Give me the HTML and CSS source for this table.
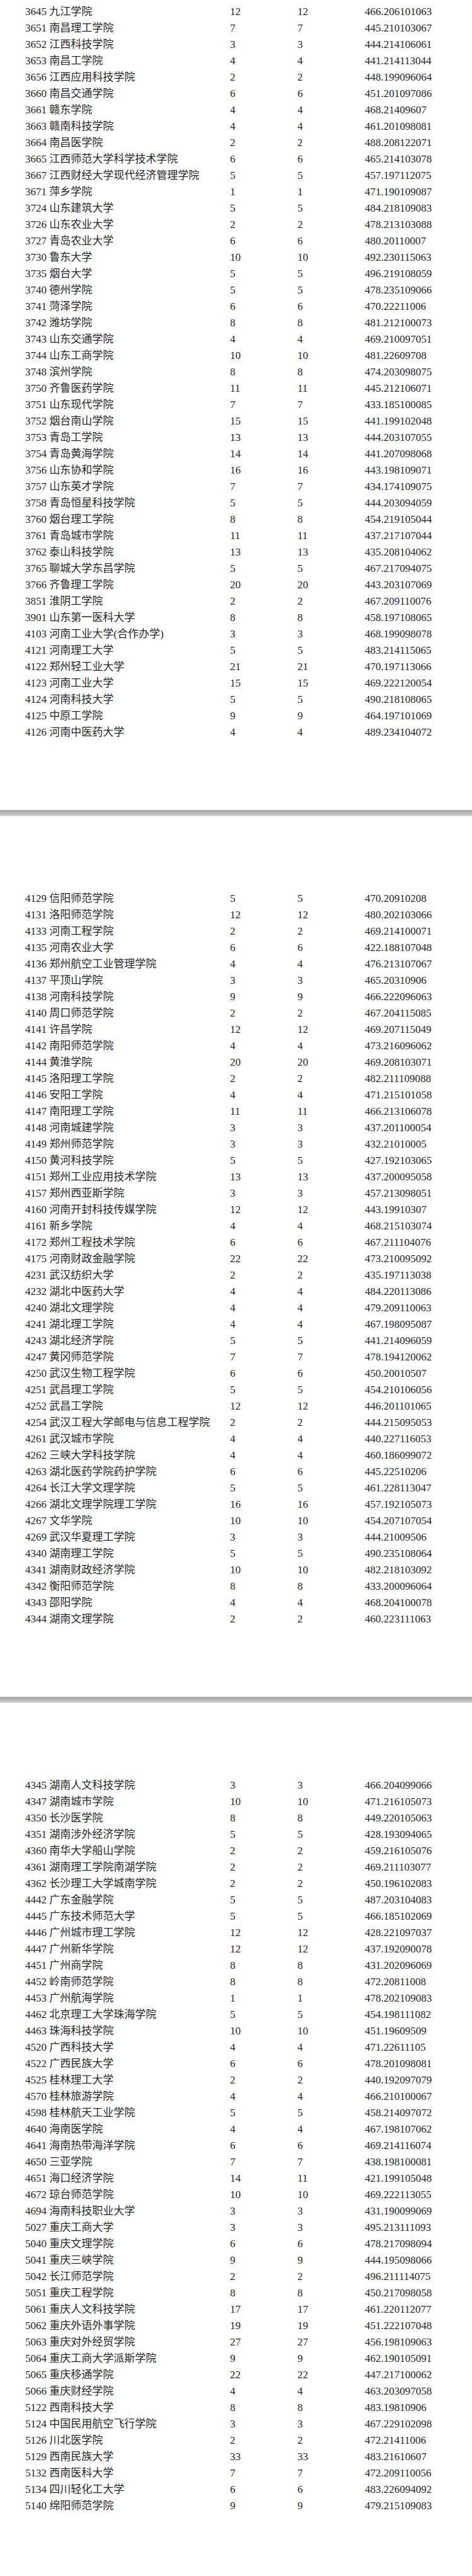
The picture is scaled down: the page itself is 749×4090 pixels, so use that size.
FILE: index.html
```html
<!DOCTYPE html>
<html lang="zh-CN">
<head>
<meta charset="utf-8">
<title>院校录取数据</title>
<link rel="stylesheet" href="styles.css">
</head>
<body>
<div class="page page-first">
<div class="row"><span>3645 九江学院</span><span>12</span><span>12</span><span>466.206101063</span></div>
<div class="row"><span>3651 南昌理工学院</span><span>7</span><span>7</span><span>445.210103067</span></div>
<div class="row"><span>3652 江西科技学院</span><span>3</span><span>3</span><span>444.214106061</span></div>
<div class="row"><span>3653 南昌工学院</span><span>4</span><span>4</span><span>441.214113044</span></div>
<div class="row"><span>3656 江西应用科技学院</span><span>2</span><span>2</span><span>448.199096064</span></div>
<div class="row"><span>3660 南昌交通学院</span><span>6</span><span>6</span><span>451.201097086</span></div>
<div class="row"><span>3661 赣东学院</span><span>4</span><span>4</span><span>468.21409607</span></div>
<div class="row"><span>3663 赣南科技学院</span><span>4</span><span>4</span><span>461.201098081</span></div>
<div class="row"><span>3664 南昌医学院</span><span>2</span><span>2</span><span>488.208122071</span></div>
<div class="row"><span>3665 江西师范大学科学技术学院</span><span>6</span><span>6</span><span>465.214103078</span></div>
<div class="row"><span>3667 江西财经大学现代经济管理学院</span><span>5</span><span>5</span><span>457.197112075</span></div>
<div class="row"><span>3671 萍乡学院</span><span>1</span><span>1</span><span>471.190109087</span></div>
<div class="row"><span>3724 山东建筑大学</span><span>5</span><span>5</span><span>484.218109083</span></div>
<div class="row"><span>3726 山东农业大学</span><span>2</span><span>2</span><span>478.213103088</span></div>
<div class="row"><span>3727 青岛农业大学</span><span>6</span><span>6</span><span>480.20110007</span></div>
<div class="row"><span>3730 鲁东大学</span><span>10</span><span>10</span><span>492.230115063</span></div>
<div class="row"><span>3735 烟台大学</span><span>5</span><span>5</span><span>496.219108059</span></div>
<div class="row"><span>3740 德州学院</span><span>5</span><span>5</span><span>478.235109066</span></div>
<div class="row"><span>3741 菏泽学院</span><span>6</span><span>6</span><span>470.22211006</span></div>
<div class="row"><span>3742 潍坊学院</span><span>8</span><span>8</span><span>481.212100073</span></div>
<div class="row"><span>3743 山东交通学院</span><span>4</span><span>4</span><span>469.210097051</span></div>
<div class="row"><span>3744 山东工商学院</span><span>10</span><span>10</span><span>481.22609708</span></div>
<div class="row"><span>3748 滨州学院</span><span>8</span><span>8</span><span>474.203098075</span></div>
<div class="row"><span>3750 齐鲁医药学院</span><span>11</span><span>11</span><span>445.212106071</span></div>
<div class="row"><span>3751 山东现代学院</span><span>7</span><span>7</span><span>433.185100085</span></div>
<div class="row"><span>3752 烟台南山学院</span><span>15</span><span>15</span><span>441.199102048</span></div>
<div class="row"><span>3753 青岛工学院</span><span>13</span><span>13</span><span>444.203107055</span></div>
<div class="row"><span>3754 青岛黄海学院</span><span>14</span><span>14</span><span>441.207098068</span></div>
<div class="row"><span>3756 山东协和学院</span><span>16</span><span>16</span><span>443.198109071</span></div>
<div class="row"><span>3757 山东英才学院</span><span>7</span><span>7</span><span>434.174109075</span></div>
<div class="row"><span>3758 青岛恒星科技学院</span><span>5</span><span>5</span><span>444.203094059</span></div>
<div class="row"><span>3760 烟台理工学院</span><span>8</span><span>8</span><span>454.219105044</span></div>
<div class="row"><span>3761 青岛城市学院</span><span>11</span><span>11</span><span>437.217107044</span></div>
<div class="row"><span>3762 泰山科技学院</span><span>13</span><span>13</span><span>435.208104062</span></div>
<div class="row"><span>3765 聊城大学东昌学院</span><span>5</span><span>5</span><span>467.217094075</span></div>
<div class="row"><span>3766 齐鲁理工学院</span><span>20</span><span>20</span><span>443.203107069</span></div>
<div class="row"><span>3851 淮阴工学院</span><span>2</span><span>2</span><span>467.209110076</span></div>
<div class="row"><span>3901 山东第一医科大学</span><span>8</span><span>8</span><span>458.197108065</span></div>
<div class="row"><span>4103 河南工业大学(合作办学)</span><span>3</span><span>3</span><span>468.199098078</span></div>
<div class="row"><span>4121 河南理工大学</span><span>5</span><span>5</span><span>483.214115065</span></div>
<div class="row"><span>4122 郑州轻工业大学</span><span>21</span><span>21</span><span>470.197113066</span></div>
<div class="row"><span>4123 河南工业大学</span><span>15</span><span>15</span><span>469.222120054</span></div>
<div class="row"><span>4124 河南科技大学</span><span>5</span><span>5</span><span>490.218108065</span></div>
<div class="row"><span>4125 中原工学院</span><span>9</span><span>9</span><span>464.197101069</span></div>
<div class="row"><span>4126 河南中医药大学</span><span>4</span><span>4</span><span>489.234104072</span></div>
</div>
<div class="sep"></div>
<div class="page">
<div class="row"><span>4129 信阳师范学院</span><span>5</span><span>5</span><span>470.20910208</span></div>
<div class="row"><span>4131 洛阳师范学院</span><span>12</span><span>12</span><span>480.202103066</span></div>
<div class="row"><span>4133 河南工程学院</span><span>2</span><span>2</span><span>469.214100071</span></div>
<div class="row"><span>4135 河南农业大学</span><span>6</span><span>6</span><span>422.188107048</span></div>
<div class="row"><span>4136 郑州航空工业管理学院</span><span>4</span><span>4</span><span>476.213107067</span></div>
<div class="row"><span>4137 平顶山学院</span><span>3</span><span>3</span><span>465.20310906</span></div>
<div class="row"><span>4138 河南科技学院</span><span>9</span><span>9</span><span>466.222096063</span></div>
<div class="row"><span>4140 周口师范学院</span><span>2</span><span>2</span><span>467.204115085</span></div>
<div class="row"><span>4141 许昌学院</span><span>12</span><span>12</span><span>469.207115049</span></div>
<div class="row"><span>4142 南阳师范学院</span><span>4</span><span>4</span><span>473.216096062</span></div>
<div class="row"><span>4144 黄淮学院</span><span>20</span><span>20</span><span>469.208103071</span></div>
<div class="row"><span>4145 洛阳理工学院</span><span>2</span><span>2</span><span>482.211109088</span></div>
<div class="row"><span>4146 安阳工学院</span><span>4</span><span>4</span><span>471.215101058</span></div>
<div class="row"><span>4147 南阳理工学院</span><span>11</span><span>11</span><span>466.213106078</span></div>
<div class="row"><span>4148 河南城建学院</span><span>3</span><span>3</span><span>437.201100054</span></div>
<div class="row"><span>4149 郑州师范学院</span><span>3</span><span>3</span><span>432.21010005</span></div>
<div class="row"><span>4150 黄河科技学院</span><span>5</span><span>5</span><span>427.192103065</span></div>
<div class="row"><span>4151 郑州工业应用技术学院</span><span>13</span><span>13</span><span>437.200095058</span></div>
<div class="row"><span>4157 郑州西亚斯学院</span><span>3</span><span>3</span><span>457.213098051</span></div>
<div class="row"><span>4160 河南开封科技传媒学院</span><span>12</span><span>12</span><span>443.19910307</span></div>
<div class="row"><span>4161 新乡学院</span><span>4</span><span>4</span><span>468.215103074</span></div>
<div class="row"><span>4172 郑州工程技术学院</span><span>6</span><span>6</span><span>467.211104076</span></div>
<div class="row"><span>4175 河南财政金融学院</span><span>22</span><span>22</span><span>473.210095092</span></div>
<div class="row"><span>4231 武汉纺织大学</span><span>2</span><span>2</span><span>435.197113038</span></div>
<div class="row"><span>4232 湖北中医药大学</span><span>4</span><span>4</span><span>484.220113086</span></div>
<div class="row"><span>4240 湖北文理学院</span><span>4</span><span>4</span><span>479.209110063</span></div>
<div class="row"><span>4241 湖北理工学院</span><span>4</span><span>4</span><span>467.198095087</span></div>
<div class="row"><span>4243 湖北经济学院</span><span>5</span><span>5</span><span>441.214096059</span></div>
<div class="row"><span>4247 黄冈师范学院</span><span>7</span><span>7</span><span>478.194120062</span></div>
<div class="row"><span>4250 武汉生物工程学院</span><span>6</span><span>6</span><span>450.20010507</span></div>
<div class="row"><span>4251 武昌理工学院</span><span>5</span><span>5</span><span>454.210106056</span></div>
<div class="row"><span>4252 武昌工学院</span><span>12</span><span>12</span><span>446.201101065</span></div>
<div class="row"><span>4254 武汉工程大学邮电与信息工程学院</span><span>2</span><span>2</span><span>444.215095053</span></div>
<div class="row"><span>4261 武汉城市学院</span><span>4</span><span>4</span><span>440.227116053</span></div>
<div class="row"><span>4262 三峡大学科技学院</span><span>4</span><span>4</span><span>460.186099072</span></div>
<div class="row"><span>4263 湖北医药学院药护学院</span><span>6</span><span>6</span><span>445.22510206</span></div>
<div class="row"><span>4264 长江大学文理学院</span><span>5</span><span>5</span><span>461.228113047</span></div>
<div class="row"><span>4266 湖北文理学院理工学院</span><span>16</span><span>16</span><span>457.192105073</span></div>
<div class="row"><span>4267 文华学院</span><span>10</span><span>10</span><span>454.207107054</span></div>
<div class="row"><span>4269 武汉华夏理工学院</span><span>3</span><span>3</span><span>444.21009506</span></div>
<div class="row"><span>4340 湖南理工学院</span><span>5</span><span>5</span><span>490.235108064</span></div>
<div class="row"><span>4341 湖南财政经济学院</span><span>10</span><span>10</span><span>482.218103092</span></div>
<div class="row"><span>4342 衡阳师范学院</span><span>8</span><span>8</span><span>433.200096064</span></div>
<div class="row"><span>4343 邵阳学院</span><span>4</span><span>4</span><span>468.204100078</span></div>
<div class="row"><span>4344 湖南文理学院</span><span>2</span><span>2</span><span>460.223111063</span></div>
</div>
<div class="sep"></div>
<div class="page page-last">
<div class="row"><span>4345 湖南人文科技学院</span><span>3</span><span>3</span><span>466.204099066</span></div>
<div class="row"><span>4347 湖南城市学院</span><span>10</span><span>10</span><span>471.216105073</span></div>
<div class="row"><span>4350 长沙医学院</span><span>8</span><span>8</span><span>449.220105063</span></div>
<div class="row"><span>4351 湖南涉外经济学院</span><span>5</span><span>5</span><span>428.193094065</span></div>
<div class="row"><span>4360 南华大学船山学院</span><span>2</span><span>2</span><span>459.216105076</span></div>
<div class="row"><span>4361 湖南理工学院南湖学院</span><span>2</span><span>2</span><span>469.211103077</span></div>
<div class="row"><span>4362 长沙理工大学城南学院</span><span>2</span><span>2</span><span>450.196102083</span></div>
<div class="row"><span>4442 广东金融学院</span><span>5</span><span>5</span><span>487.203104083</span></div>
<div class="row"><span>4445 广东技术师范大学</span><span>5</span><span>5</span><span>466.185102069</span></div>
<div class="row"><span>4446 广州城市理工学院</span><span>12</span><span>12</span><span>428.221097037</span></div>
<div class="row"><span>4447 广州新华学院</span><span>12</span><span>12</span><span>437.192090078</span></div>
<div class="row"><span>4451 广州商学院</span><span>8</span><span>8</span><span>431.202096069</span></div>
<div class="row"><span>4452 岭南师范学院</span><span>8</span><span>8</span><span>472.20811008</span></div>
<div class="row"><span>4453 广州航海学院</span><span>1</span><span>1</span><span>478.202109083</span></div>
<div class="row"><span>4462 北京理工大学珠海学院</span><span>5</span><span>5</span><span>454.198111082</span></div>
<div class="row"><span>4463 珠海科技学院</span><span>10</span><span>10</span><span>451.19609509</span></div>
<div class="row"><span>4520 广西科技大学</span><span>4</span><span>4</span><span>471.22611105</span></div>
<div class="row"><span>4522 广西民族大学</span><span>6</span><span>6</span><span>478.201098081</span></div>
<div class="row"><span>4525 桂林理工大学</span><span>2</span><span>2</span><span>440.192097079</span></div>
<div class="row"><span>4570 桂林旅游学院</span><span>4</span><span>4</span><span>466.210100067</span></div>
<div class="row"><span>4598 桂林航天工业学院</span><span>5</span><span>5</span><span>458.214097072</span></div>
<div class="row"><span>4640 海南医学院</span><span>4</span><span>4</span><span>467.198107062</span></div>
<div class="row"><span>4641 海南热带海洋学院</span><span>6</span><span>6</span><span>469.214116074</span></div>
<div class="row"><span>4650 三亚学院</span><span>7</span><span>7</span><span>438.198100081</span></div>
<div class="row"><span>4651 海口经济学院</span><span>14</span><span>11</span><span>421.199105048</span></div>
<div class="row"><span>4672 琼台师范学院</span><span>10</span><span>10</span><span>469.222113055</span></div>
<div class="row"><span>4694 海南科技职业大学</span><span>3</span><span>3</span><span>431.190099069</span></div>
<div class="row"><span>5027 重庆工商大学</span><span>3</span><span>3</span><span>495.213111093</span></div>
<div class="row"><span>5040 重庆文理学院</span><span>6</span><span>6</span><span>478.217098094</span></div>
<div class="row"><span>5041 重庆三峡学院</span><span>9</span><span>9</span><span>444.195098066</span></div>
<div class="row"><span>5042 长江师范学院</span><span>2</span><span>2</span><span>496.211114075</span></div>
<div class="row"><span>5051 重庆工程学院</span><span>8</span><span>8</span><span>450.217098058</span></div>
<div class="row"><span>5061 重庆人文科技学院</span><span>17</span><span>17</span><span>461.220112077</span></div>
<div class="row"><span>5062 重庆外语外事学院</span><span>19</span><span>19</span><span>451.222107048</span></div>
<div class="row"><span>5063 重庆对外经贸学院</span><span>27</span><span>27</span><span>456.198109063</span></div>
<div class="row"><span>5064 重庆工商大学派斯学院</span><span>9</span><span>9</span><span>462.190105091</span></div>
<div class="row"><span>5065 重庆移通学院</span><span>22</span><span>22</span><span>447.217100062</span></div>
<div class="row"><span>5066 重庆财经学院</span><span>4</span><span>4</span><span>463.203097058</span></div>
<div class="row"><span>5122 西南科技大学</span><span>8</span><span>8</span><span>483.19810906</span></div>
<div class="row"><span>5124 中国民用航空飞行学院</span><span>3</span><span>3</span><span>467.229102098</span></div>
<div class="row"><span>5126 川北医学院</span><span>2</span><span>2</span><span>472.21411006</span></div>
<div class="row"><span>5129 西南民族大学</span><span>33</span><span>33</span><span>483.21610607</span></div>
<div class="row"><span>5132 西南医科大学</span><span>7</span><span>7</span><span>472.209110056</span></div>
<div class="row"><span>5134 四川轻化工大学</span><span>6</span><span>6</span><span>483.226094092</span></div>
<div class="row"><span>5140 绵阳师范学院</span><span>9</span><span>9</span><span>479.215109083</span></div>
</div>
</body>
</html>
```

FILE: styles.css
```css
html, body {
  margin: 0;
  padding: 0;
  background: #ffffff;
}

body {
  width: 749px;
  color: #262626;
  font-family: "Liberation Serif", "Noto Sans CJK SC", serif;
  font-size: 17px;
}

.page {
  padding: 118px 0 110px 40px;
}

.page-first {
  padding-top: 6px;
}

.page-last {
  padding-bottom: 98px;
}

.row {
  display: grid;
  grid-template-columns: 325px 107px 107px auto;
  height: 26px;
  line-height: 26px;
  white-space: nowrap;
}

.sep {
  height: 10px;
  background: linear-gradient(to bottom, #a9a9a9 0%, #b9b9b9 60%, #dedede 100%);
}
```
